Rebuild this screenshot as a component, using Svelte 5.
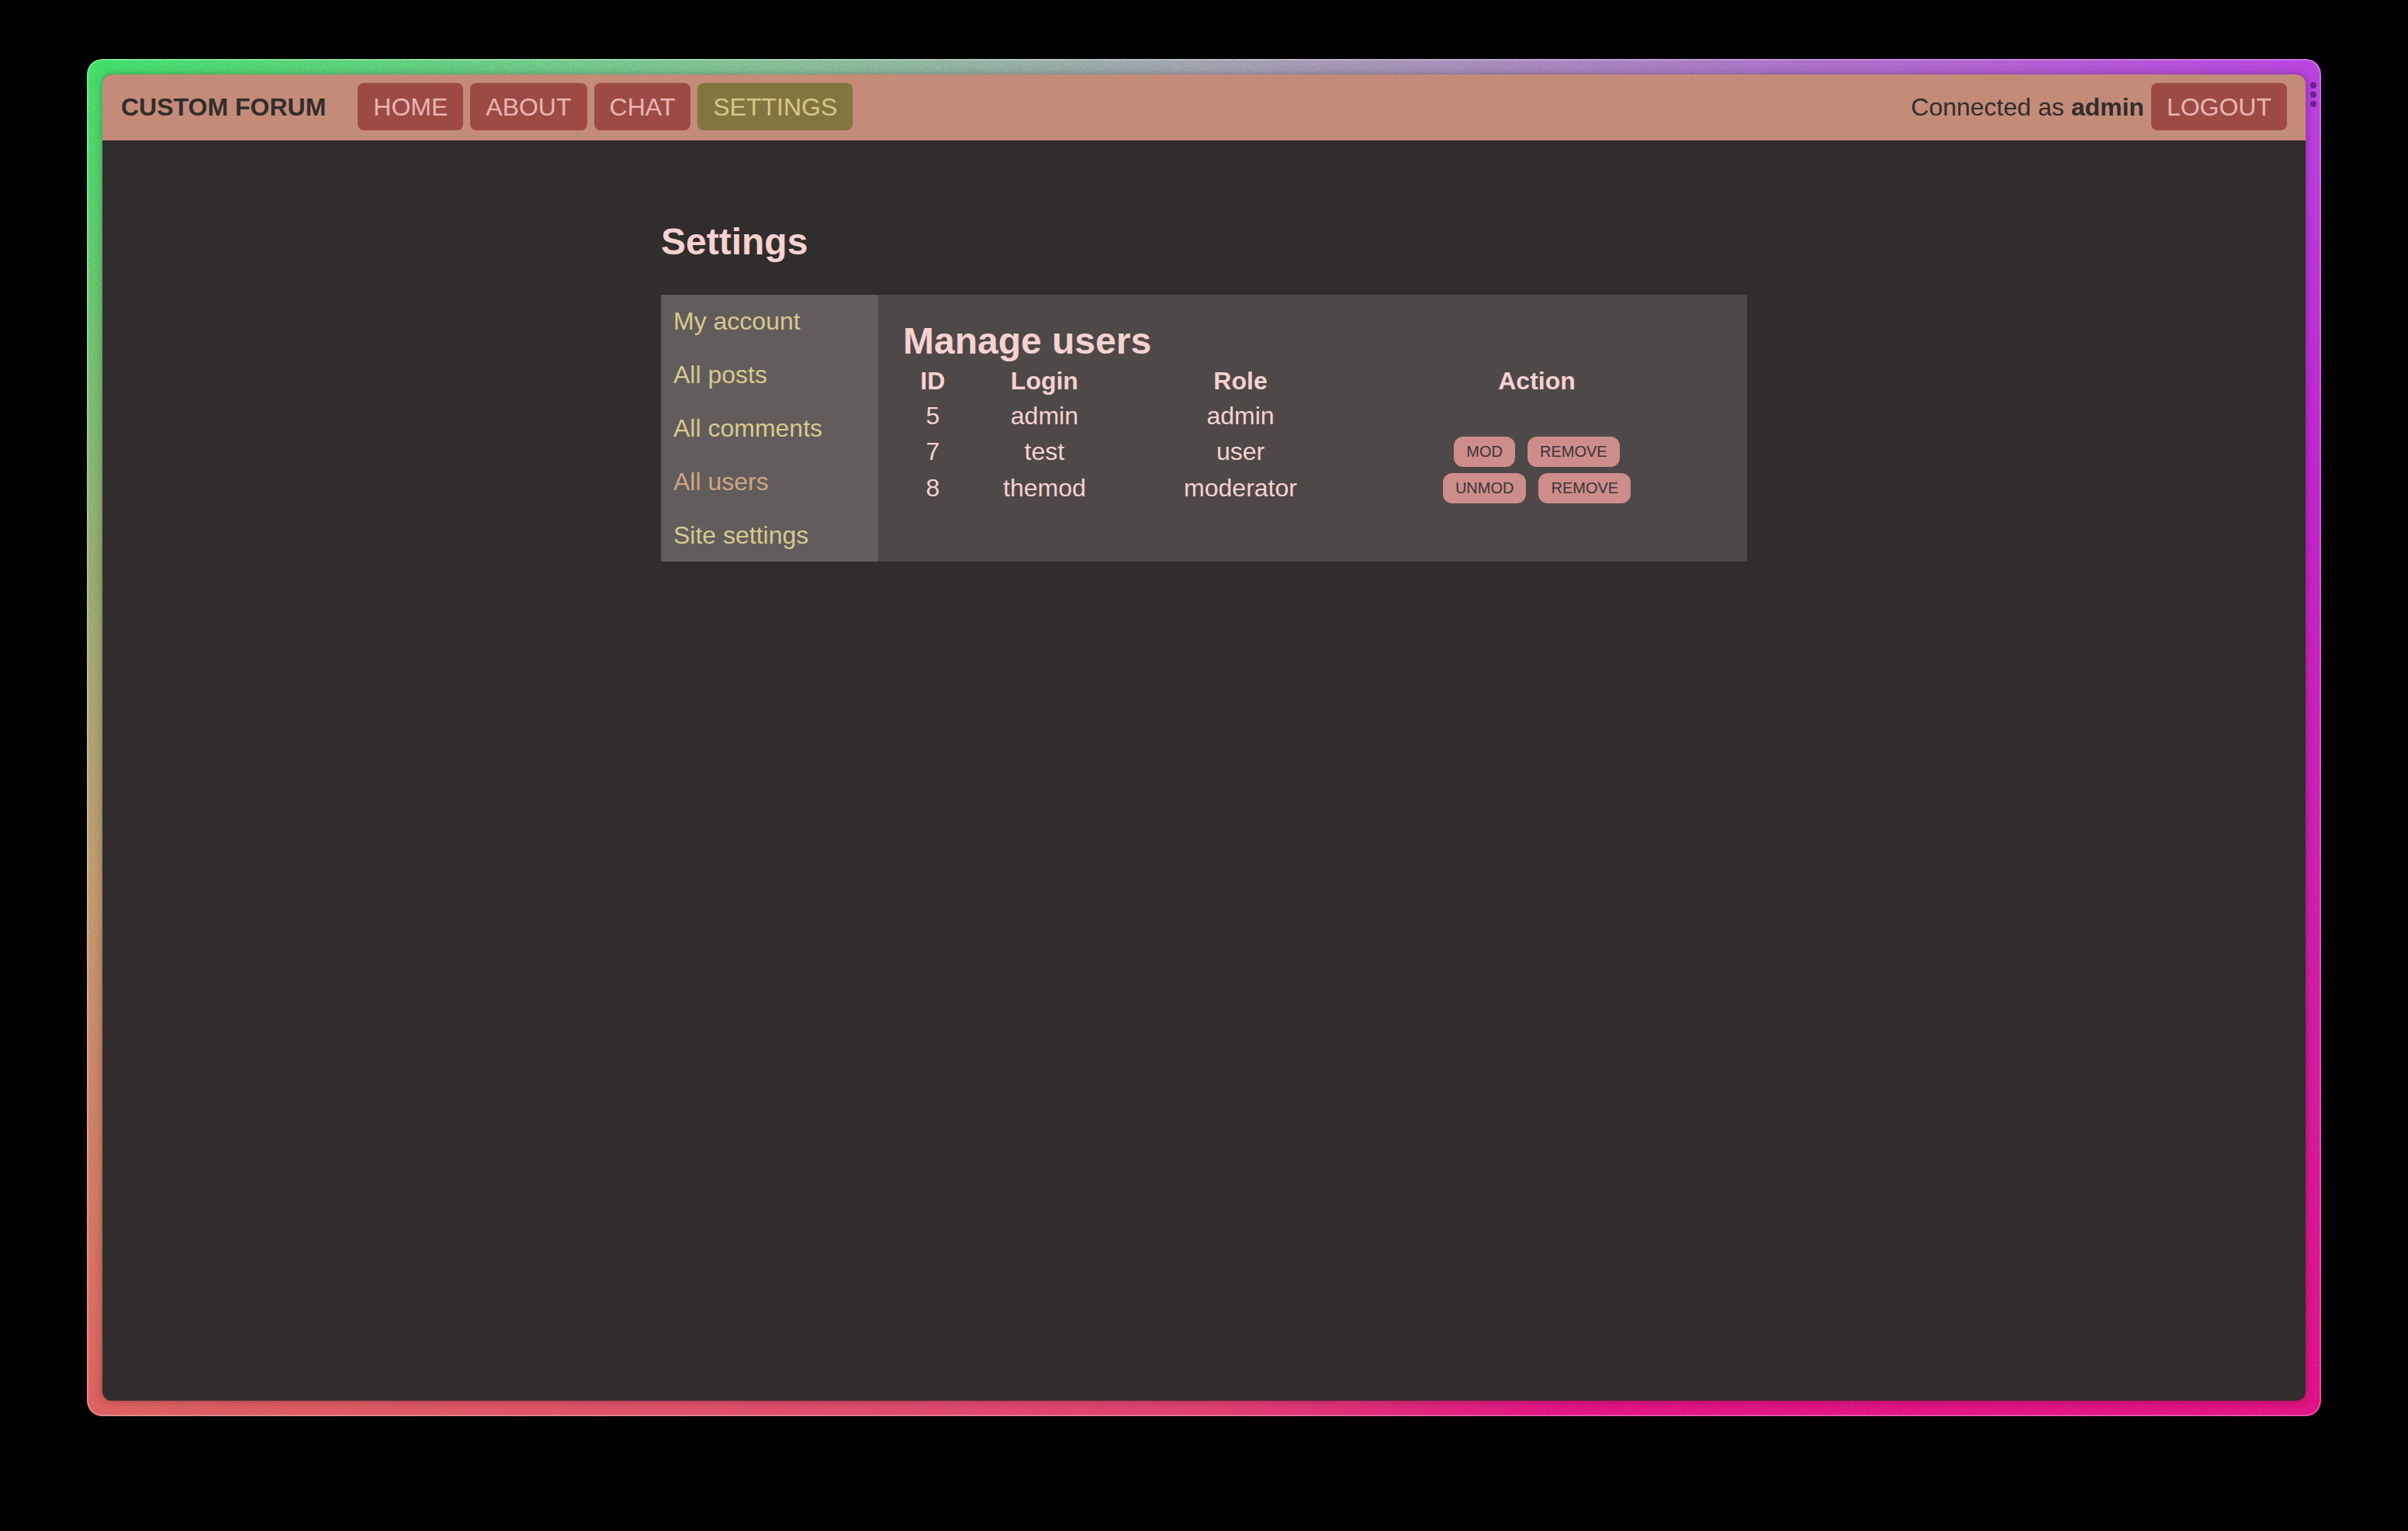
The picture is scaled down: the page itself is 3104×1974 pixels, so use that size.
<script>
  const nav = [
    { label: 'HOME' },
    { label: 'ABOUT' },
    { label: 'CHAT' },
    { label: 'SETTINGS', active: true }
  ];
  const sections = [
    { label: 'My account' },
    { label: 'All posts' },
    { label: 'All comments' },
    { label: 'All users', active: true },
    { label: 'Site settings' }
  ];
  const users = [
    { id: 5, login: 'admin', role: 'admin', actions: [] },
    { id: 7, login: 'test', role: 'user', actions: ['MOD', 'REMOVE'] },
    { id: 8, login: 'themod', role: 'moderator', actions: ['UNMOD', 'REMOVE'] }
  ];
</script>

<div class="desktop">
  <div class="frame">
    <svg class="grain" aria-hidden="true" width="100%" height="100%">
      <filter id="grain">
        <feTurbulence type="fractalNoise" baseFrequency="0.35" numOctaves="2" />
        <feColorMatrix values="0 0 0 0 0.2  0 0 0 0 0.2  0 0 0 0 0.3  0.9 0 0 0 -0.3" />
      </filter>
      <rect width="100%" height="100%" filter="url(#grain)" />
    </svg>
    <button class="dots" aria-label="Window menu"><i></i><i></i><i></i></button>
    <div class="page">
      <header>
        <span class="brand">CUSTOM FORUM</span>
        <nav>
          {#each nav as item}
            <a class="pill" class:active={item.active} href="#top">{item.label}</a>
          {/each}
        </nav>
        <span class="who">Connected as <b>admin</b></span>
        <button class="pill">LOGOUT</button>
      </header>
      <main>
        <h2>Settings</h2>
        <div class="panel">
          <nav class="side" aria-label="Settings">
            {#each sections as item}
              <a class:active={item.active} href="#top">{item.label}</a>
            {/each}
          </nav>
          <section>
            <h2>Manage users</h2>
            <table>
              <thead>
                <tr><th>ID</th><th>Login</th><th>Role</th><th>Action</th></tr>
              </thead>
              <tbody>
                {#each users as user}
                  <tr>
                    <td>{user.id}</td>
                    <td>{user.login}</td>
                    <td>{user.role}</td>
                    <td>
                      <div class="actions">
                        {#each user.actions as action}
                          <button>{action}</button>
                        {/each}
                      </div>
                    </td>
                  </tr>
                {/each}
              </tbody>
            </table>
          </section>
        </div>
      </main>
    </div>
  </div>
</div>

<style>
  :global(body) {
    margin: 0;
    background: #000;
  }
  .desktop {
    box-sizing: border-box;
    display: flex;
    min-height: 100vh;
    padding: 76px 112px 148px;
    background: #000;
    font: 32px/37px 'Liberation Sans', Arial, sans-serif;
    color: #f6d2d1;
  }
  .frame {
    position: relative;
    display: flex;
    flex: 1;
    padding: 20px;
    border-radius: 20px;
    overflow: hidden;
    background:
      linear-gradient(to right, #e8605c, #ea3c6e 50%, #ec0a84 66%) bottom / 100% 32px no-repeat,
      linear-gradient(to bottom, #3ee868, #9cb070 38%, #c8a06c 60%, #e8605c) left / 32px 100% no-repeat,
      linear-gradient(to bottom, #c040e8, #c81ed4 30%, #ec0a84) right / 32px 100% no-repeat,
      linear-gradient(to right, #3ee868, #88c898 30%, #a8a8b4 50%, #b080c8 70%, #c040e8);
  }
  .frame::after {
    content: '';
    position: absolute;
    inset: 0;
    border: 2px solid rgb(255 255 255 / 0.25);
    border-radius: 20px;
    pointer-events: none;
  }
  .grain {
    position: absolute;
    inset: 0;
    opacity: 0.6;
  }
  .dots {
    position: absolute;
    top: 30px;
    right: 6px;
    display: grid;
    gap: 4px;
    padding: 0;
    border: 0;
    background: none;
  }
  .dots i {
    width: 8px;
    height: 8px;
    border-radius: 50%;
    background: #6c2290;
  }
  .page {
    position: relative;
    flex: 1;
    border-radius: 12px;
    overflow: hidden;
    background: #312d2c;
    box-shadow: 0 0 12px rgb(0 0 0 / 0.3);
  }
  header {
    display: flex;
    align-items: baseline;
    padding: 11px 24px 13px;
    background: #c48b79;
    color: #312d2c;
  }
  .brand {
    margin-right: 41px;
    font-weight: bold;
  }
  header nav {
    display: flex;
    gap: 9px;
  }
  .who {
    margin-left: auto;
    margin-right: 9px;
  }
  .pill {
    padding: 13px 20px 11px;
    border: 0;
    border-radius: 8px;
    background: #9d4a45;
    color: #e8b5b3;
    font: inherit;
    text-decoration: none;
  }
  .pill.active {
    background: #83753f;
    color: #d5c888;
  }
  main {
    max-width: 1400px;
    margin: 0 auto;
    padding-top: 103px;
  }
  h2 {
    margin: 0;
    font-size: 48px;
    line-height: 55px;
  }
  .panel {
    display: grid;
    grid-template-columns: 1fr 4fr;
    margin-top: 41px;
    background: #4e4848;
  }
  .side {
    display: grid;
    gap: 1px;
    background: #625c5c;
  }
  .side a {
    padding: 16px;
    line-height: 36px;
    color: #d8c98c;
    text-decoration: none;
  }
  .side a.active {
    color: #d0a582;
  }
  section {
    padding: 32px;
  }
  table {
    width: 100%;
    border-spacing: 4px;
    text-align: center;
  }
  th,
  td {
    padding: 2px;
  }
  .actions {
    display: flex;
    justify-content: center;
    gap: 16px;
  }
  .actions button {
    padding: 8px 16px;
    border: 0;
    border-radius: 12px;
    background: #cd8d8b;
    color: #3a3535;
    font: 20px/23px 'Liberation Sans', Arial, sans-serif;
  }
</style>
